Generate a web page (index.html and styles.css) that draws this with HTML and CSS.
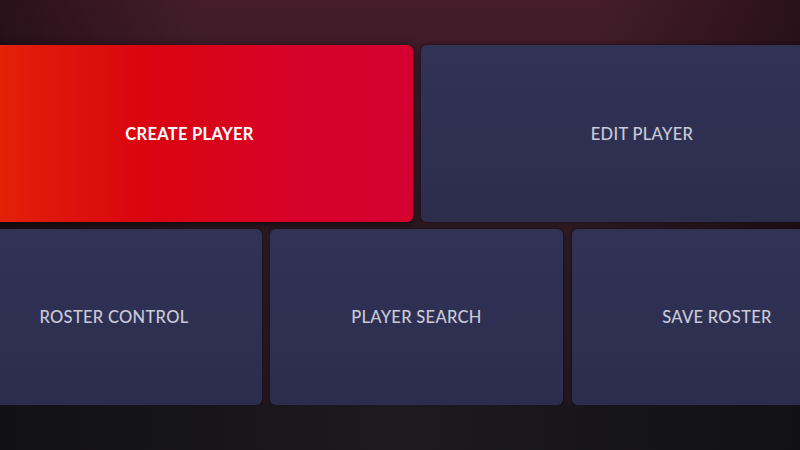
FILE: index.html
```html
<!DOCTYPE html>
<html>
<head>
<meta charset="utf-8">
<link rel="stylesheet" href="styles.css">
</head>
<body>
<div class="screen">
  <div class="top-band"></div>
  <div class="grid">
    <div class="row row-1">
      <div class="tile tile-active tile-create"><span class="label">CREATE PLAYER</span></div>
      <div class="tile tile-edit"><span class="label">EDIT PLAYER</span></div>
    </div>
    <div class="row row-2">
      <div class="tile tile-roster"><span class="label">ROSTER CONTROL</span></div>
      <div class="tile tile-search"><span class="label">PLAYER SEARCH</span></div>
      <div class="tile tile-save"><span class="label">SAVE ROSTER</span></div>
    </div>
  </div>
  <div class="bottom-band"></div>
</div>
</body>
</html>
```
FILE: styles.css
```css
html, body {
  margin: 0;
  padding: 0;
  width: 800px;
  height: 450px;
  overflow: hidden;
  background: #141216;
}

.screen {
  width: 800px;
  height: 450px;
  display: flex;
  flex-direction: column;
  overflow: hidden;
  background:
    linear-gradient(to right, rgba(20,6,12,0.55) 0%, rgba(20,6,12,0) 25%, rgba(20,6,12,0) 75%, rgba(20,6,12,0.55) 100%),
    linear-gradient(to bottom, #451d2a 0px, #3e1b27 60px, #2e1a23 220px, #241820 400px, #141216 410px);
  font-family: "Lato", "Noto Sans", sans-serif;
}

.top-band {
  height: 45px;
  flex: none;
}

.grid {
  display: flex;
  flex-direction: column;
  gap: 7px;
  margin-left: -34px;
  width: 897px;
  flex: none;
}

.row {
  display: flex;
  gap: 8px;
}

.row-1 { height: 177px; }
.row-2 { height: 176px; }

.tile {
  border-radius: 6px;
  display: flex;
  align-items: center;
  justify-content: center;
  background: linear-gradient(to bottom, #303256 0%, #2e3052 60%, #2c2d4d 100%);
  box-shadow: 0 0 4px rgba(10, 4, 8, 0.6);
}

.tile-create { width: 447px; }
.tile-edit { width: 442px; }
.tile-roster { width: 296px; }
.tile-search { width: 293px; margin-right: 1px; }
.tile-save { width: 290px; }

.tile-active {
  background: linear-gradient(to right, #e52a05 0%, #e01a0a 15%, #d9050f 40%, #d7022a 75%, #d40030 100%);
  box-shadow: 0 2px 8px rgba(0, 0, 0, 0.7);
}

.label {
  font-size: 16.5px;
  font-weight: 500;
  color: #c9c9d8;
  letter-spacing: 0.3px;
}

.tile-active .label {
  color: #ffffff;
  font-weight: 700;
}

.bottom-band {
  flex: 1;
  background: linear-gradient(to right, #111014 0%, #1c1a1e 50%, #111014 100%);
}
```
